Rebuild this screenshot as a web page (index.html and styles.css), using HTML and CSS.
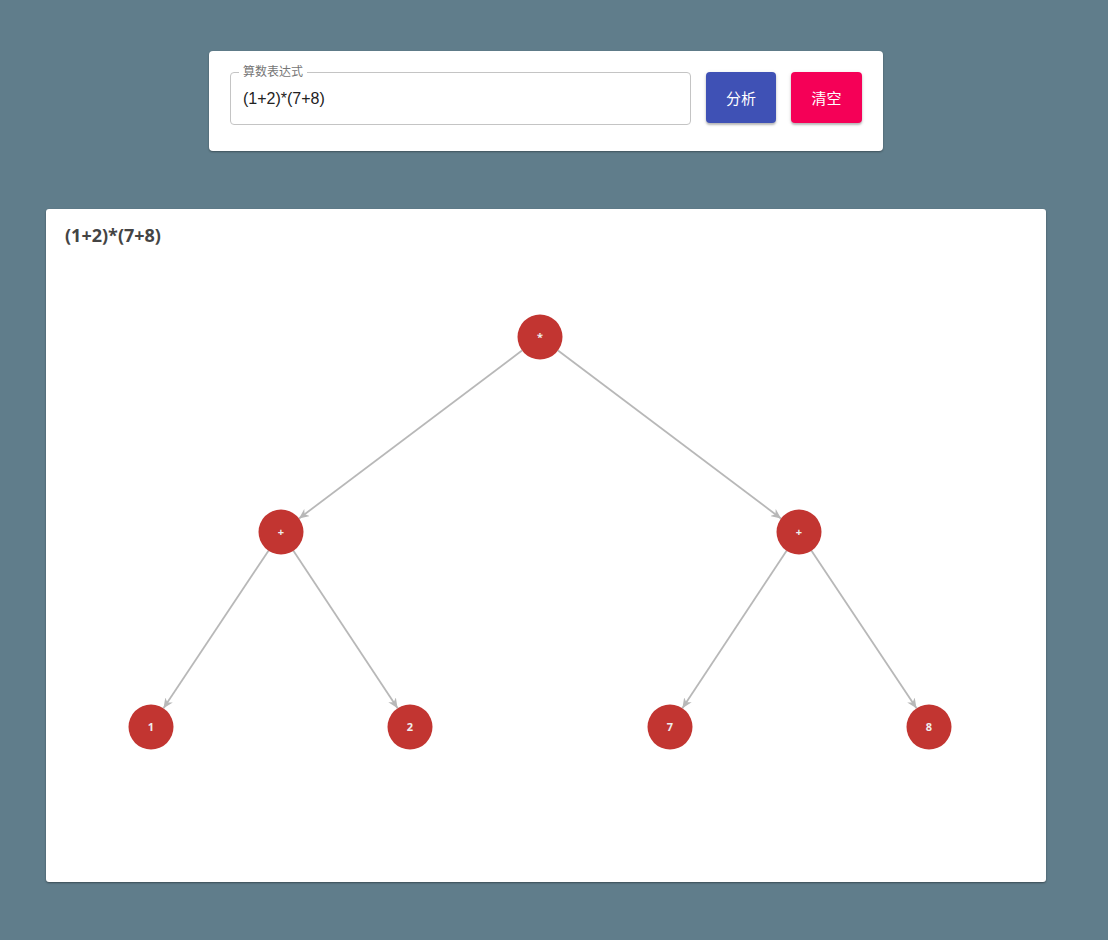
FILE: index.html
```html
<!DOCTYPE html>
<html lang="zh">
<head>
<meta charset="utf-8">
<title>算数表达式</title>
<link rel="stylesheet" href="styles.css">
</head>
<body>
<div class="page">
  <div class="form-card">
    <div class="field">
      <span class="field-label">算数表达式</span>
      <input class="field-input" type="text" value="(1+2)*(7+8)">
    </div>
    <button class="btn btn-primary">分析</button>
    <button class="btn btn-secondary">清空</button>
  </div>

  <div class="chart-card">
    <div class="chart-title">(1+2)*(7+8)</div>
    <svg class="chart" width="1000" height="673" viewBox="0 0 1000 673" xmlns="http://www.w3.org/2000/svg">
      <defs>
        <marker id="arrow" markerWidth="11" markerHeight="9" refX="10" refY="4.5" orient="auto" markerUnits="userSpaceOnUse">
          <path d="M0,0 L10,4.5 L0,9 L3,4.5 z" fill="#b8b8b8"/>
        </marker>
      </defs>
      <g class="edges" stroke="#b8b8b8" stroke-width="1.8" fill="none">
        <line x1="476" y1="141.5" x2="253" y2="309.5" marker-end="url(#arrow)"/>
        <line x1="512" y1="141.5" x2="735" y2="309.5" marker-end="url(#arrow)"/>
        <line x1="222.5" y1="341.7" x2="117.5" y2="499.3" marker-end="url(#arrow)"/>
        <line x1="247.4" y1="341.8" x2="351.6" y2="499.2" marker-end="url(#arrow)"/>
        <line x1="740.6" y1="341.8" x2="636.4" y2="499.2" marker-end="url(#arrow)"/>
        <line x1="765.5" y1="341.7" x2="870.5" y2="499.3" marker-end="url(#arrow)"/>
      </g>
      <g class="nodes" fill="#c23531">
        <circle cx="494" cy="128" r="22.5"/>
        <circle cx="235" cy="323" r="22.5"/>
        <circle cx="753" cy="323" r="22.5"/>
        <circle cx="105" cy="518" r="22.5"/>
        <circle cx="364" cy="518" r="22.5"/>
        <circle cx="624" cy="518" r="22.5"/>
        <circle cx="883" cy="518" r="22.5"/>
      </g>
      <g class="labels">
        <text x="494" y="131.5">*</text>
        <text x="235" y="326.5">+</text>
        <text x="753" y="326.5">+</text>
        <text x="105" y="521.5">1</text>
        <text x="364" y="521.5">2</text>
        <text x="624" y="521.5">7</text>
        <text x="883" y="521.5">8</text>
      </g>
    </svg>
  </div>
</div>
</body>
</html>
```

FILE: styles.css
```css
html, body {
  margin: 0;
  padding: 0;
}

body {
  background: #607d8b;
  font-family: Roboto, "Liberation Sans", "Noto Sans CJK SC", sans-serif;
  width: 1108px;
  height: 940px;
  overflow: hidden;
}

.page {
  display: flex;
  flex-direction: column;
  padding-top: 51px;
}

.form-card {
  box-sizing: border-box;
  margin-left: 209px;
  width: 674px;
  height: 100px;
  background: #fff;
  border-radius: 4px;
  box-shadow: 0 1px 2px rgba(0,0,0,0.35);
  display: flex;
  align-items: flex-start;
  padding: 21px 21px 0 21px;
  gap: 15px;
}

.field {
  position: relative;
  width: 461px;
  height: 53px;
  box-sizing: border-box;
  border: 1px solid #c4c4c4;
  border-radius: 4px;
  display: flex;
  align-items: center;
}

.field-label {
  position: absolute;
  top: -8px;
  left: 8px;
  padding: 0 4px;
  background: #fff;
  font-size: 12px;
  line-height: 14px;
  color: #757575;
}

.field-input {
  border: none;
  outline: none;
  background: transparent;
  width: 100%;
  padding: 0 12px;
  font-family: "Liberation Sans", Arial, sans-serif;
  font-size: 16px;
  color: #222;
}

.btn {
  border: none;
  border-radius: 4px;
  height: 51px;
  color: #fff;
  font-family: Roboto, "Noto Sans CJK SC", sans-serif;
  font-size: 15px;
  box-shadow: 0 2px 2px rgba(0,0,0,0.22), 0 1px 4px rgba(0,0,0,0.12);
  cursor: pointer;
}

.btn-primary {
  width: 70px;
  background: #3f51b5;
}

.btn-secondary {
  width: 71px;
  background: #f50057;
}

.chart-card {
  position: relative;
  margin-top: 58px;
  margin-left: 46px;
  width: 1000px;
  height: 673px;
  background: #fff;
  border-radius: 3px;
  box-shadow: 0 1px 2px rgba(0,0,0,0.4);
}

.chart-title {
  padding: 15px 0 0 19px;
  font-family: "Open Sans", "Noto Sans", sans-serif;
  font-weight: bold;
  font-size: 18px;
  line-height: 22px;
  color: #444;
}

.chart {
  position: absolute;
  left: 0;
  top: 0;
}

.labels text {
  fill: #eeeeee;
  font-family: "Noto Sans", "DejaVu Sans", sans-serif;
  font-size: 11px;
  font-weight: bold;
  text-anchor: middle;
}
```
